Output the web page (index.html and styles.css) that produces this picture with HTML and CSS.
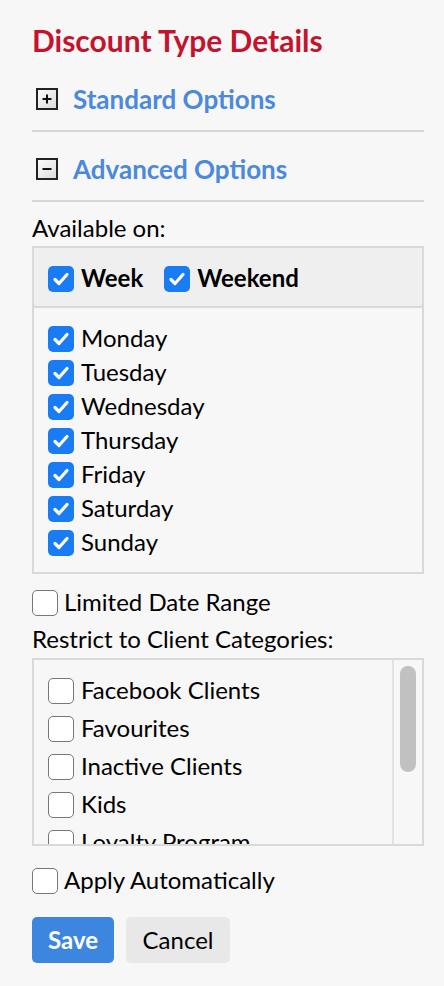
FILE: index.html
```html
<!DOCTYPE html>
<html>
<head>
<meta charset="utf-8">
<link rel="stylesheet" href="styles.css">
</head>
<body>
<div class="panel">
  <h1 class="title">Discount Type Details</h1>

  <div class="section first">
    <svg class="toggle" width="22" height="22" viewBox="0 0 22 22"><defs><linearGradient id="g1" x1="0" y1="0" x2="1" y2="1"><stop offset="0" stop-color="#ffffff"/><stop offset="1" stop-color="#d8d8d8"/></linearGradient></defs><rect x="1" y="1" width="20" height="20" fill="url(#g1)" stroke="#222" stroke-width="2"/><path d="M6.5 11h9M11 6.5v9" stroke="#111" stroke-width="2"/></svg>
    <span class="section-title">Standard Options</span>
  </div>

  <div class="section">
    <svg class="toggle" width="22" height="22" viewBox="0 0 22 22"><defs><linearGradient id="g2" x1="0" y1="0" x2="1" y2="1"><stop offset="0" stop-color="#ffffff"/><stop offset="1" stop-color="#d8d8d8"/></linearGradient></defs><rect x="1" y="1" width="20" height="20" fill="url(#g2)" stroke="#222" stroke-width="2"/><path d="M6.5 11h9" stroke="#111" stroke-width="2"/></svg>
    <span class="section-title">Advanced Options</span>
  </div>

  <div class="label">Available on:</div>
  <div class="box">
    <div class="box-head">
      <div class="check bold"><span class="cb on"><svg viewBox="0 0 26 26"><path d="M7 13.5l4 4 8-9" fill="none" stroke="#fff" stroke-width="3.2" stroke-linecap="round" stroke-linejoin="round"/></svg></span><span class="t">Week</span></div>
      <div class="check bold"><span class="cb on"><svg viewBox="0 0 26 26"><path d="M7 13.5l4 4 8-9" fill="none" stroke="#fff" stroke-width="3.2" stroke-linecap="round" stroke-linejoin="round"/></svg></span><span class="t">Weekend</span></div>
    </div>
    <div class="days">
      <div class="check day"><span class="cb on"><svg viewBox="0 0 26 26"><path d="M7 13.5l4 4 8-9" fill="none" stroke="#fff" stroke-width="3.2" stroke-linecap="round" stroke-linejoin="round"/></svg></span><span class="t">Monday</span></div>
      <div class="check day"><span class="cb on"><svg viewBox="0 0 26 26"><path d="M7 13.5l4 4 8-9" fill="none" stroke="#fff" stroke-width="3.2" stroke-linecap="round" stroke-linejoin="round"/></svg></span><span class="t">Tuesday</span></div>
      <div class="check day"><span class="cb on"><svg viewBox="0 0 26 26"><path d="M7 13.5l4 4 8-9" fill="none" stroke="#fff" stroke-width="3.2" stroke-linecap="round" stroke-linejoin="round"/></svg></span><span class="t">Wednesday</span></div>
      <div class="check day"><span class="cb on"><svg viewBox="0 0 26 26"><path d="M7 13.5l4 4 8-9" fill="none" stroke="#fff" stroke-width="3.2" stroke-linecap="round" stroke-linejoin="round"/></svg></span><span class="t">Thursday</span></div>
      <div class="check day"><span class="cb on"><svg viewBox="0 0 26 26"><path d="M7 13.5l4 4 8-9" fill="none" stroke="#fff" stroke-width="3.2" stroke-linecap="round" stroke-linejoin="round"/></svg></span><span class="t">Friday</span></div>
      <div class="check day"><span class="cb on"><svg viewBox="0 0 26 26"><path d="M7 13.5l4 4 8-9" fill="none" stroke="#fff" stroke-width="3.2" stroke-linecap="round" stroke-linejoin="round"/></svg></span><span class="t">Saturday</span></div>
      <div class="check day"><span class="cb on"><svg viewBox="0 0 26 26"><path d="M7 13.5l4 4 8-9" fill="none" stroke="#fff" stroke-width="3.2" stroke-linecap="round" stroke-linejoin="round"/></svg></span><span class="t">Sunday</span></div>
    </div>
  </div>

  <div class="check solo"><span class="cb"></span><span class="t">Limited Date Range</span></div>

  <div class="label label2">Restrict to Client Categories:</div>
  <div class="box cats">
    <div class="cat-list">
      <div class="check cat"><span class="cb"></span><span class="t">Facebook Clients</span></div>
      <div class="check cat"><span class="cb"></span><span class="t">Favourites</span></div>
      <div class="check cat"><span class="cb"></span><span class="t">Inactive Clients</span></div>
      <div class="check cat"><span class="cb"></span><span class="t">Kids</span></div>
      <div class="check cat"><span class="cb"></span><span class="t">Loyalty Program</span></div>
    </div>
    <div class="scroll"><div class="thumb"></div></div>
  </div>

  <div class="check solo apply"><span class="cb"></span><span class="t">Apply Automatically</span></div>

  <div class="buttons">
    <button class="btn save">Save</button>
    <button class="btn cancel">Cancel</button>
  </div>
</div>
</body>
</html>
```

FILE: styles.css
```css
html, body {
  margin: 0;
  padding: 0;
  background: #f7f7f7;
}
body {
  font-family: Lato, "Noto Sans", sans-serif;
  color: #000;
}
.panel {
  width: 392px;
  padding: 0 0 0 32px;
}
.title {
  margin: 0;
  padding-top: 22px;
  font-size: 30px;
  line-height: 36px;
  font-weight: 700;
  color: #c4142d;
}
.section {
  display: flex;
  align-items: center;
  gap: 15px;
  padding: 26px 0 20px 4px;
  border-bottom: 2px solid #d6d6d6;
}
.section.first {
  padding-top: 30px;
}
.toggle {
  display: block;
  flex: none;
}
.section-title {
  font-size: 26px;
  line-height: 22px;
  font-weight: 700;
  color: #4a89dc;
}
.label {
  font-size: 24px;
  line-height: 28px;
  padding-top: 12px;
  padding-bottom: 4px;
}
.box {
  border: 2px solid #d9d9d9;
}
.box-head {
  display: flex;
  gap: 21px;
  padding: 18px 14px 14px;
  background: #efefef;
  border-bottom: 2px solid #d9d9d9;
}
.check {
  display: flex;
  align-items: center;
  gap: 7px;
  font-size: 24px;
  line-height: 26px;
}
.check .t {
  line-height: 20px;
  margin-bottom: 3px;
}
.check.bold {
  font-weight: 700;
}
.cb {
  flex: none;
  width: 26px;
  height: 26px;
  box-sizing: border-box;
  border-radius: 5px;
  border: 1.5px solid #777;
  background: #fff;
}
.cb.on {
  background: #1a7cf5;
  border: none;
}
.cb svg {
  display: block;
  width: 26px;
  height: 26px;
}
.days {
  padding: 14px 14px 12px;
}
.day {
  height: 34px;
}
.solo {
  gap: 6px;
  padding-top: 16px;
}
.label2 {
  padding-top: 9px;
  padding-bottom: 5px;
}
.cats {
  display: flex;
  height: 188px;
  box-sizing: border-box;
  overflow: hidden;
}
.cat-list {
  flex: 1;
  padding: 12px 14px 0;
}
.cat {
  height: 38px;
  flex: none;
}
.scroll {
  flex: none;
  width: 30px;
  border-left: 2px solid #e2e2e2;
  padding: 6px 0 0 6px;
  box-sizing: border-box;
}
.thumb {
  width: 16px;
  height: 106px;
  border-radius: 8px;
  background: #c1c1c1;
}
.apply {
  padding-top: 22px;
}
.buttons {
  display: flex;
  gap: 12px;
  padding-top: 23px;
}
.btn {
  font-family: Lato, "Noto Sans", sans-serif;
  font-size: 24px;
  height: 46px;
  border: none;
  border-radius: 5px;
  padding: 0 0 2px;
}
.save {
  background: #3d86e0;
  color: #fff;
  font-weight: 700;
  width: 82px;
}
.cancel {
  background: #e8e8e8;
  color: #000;
  width: 104px;
}
```
